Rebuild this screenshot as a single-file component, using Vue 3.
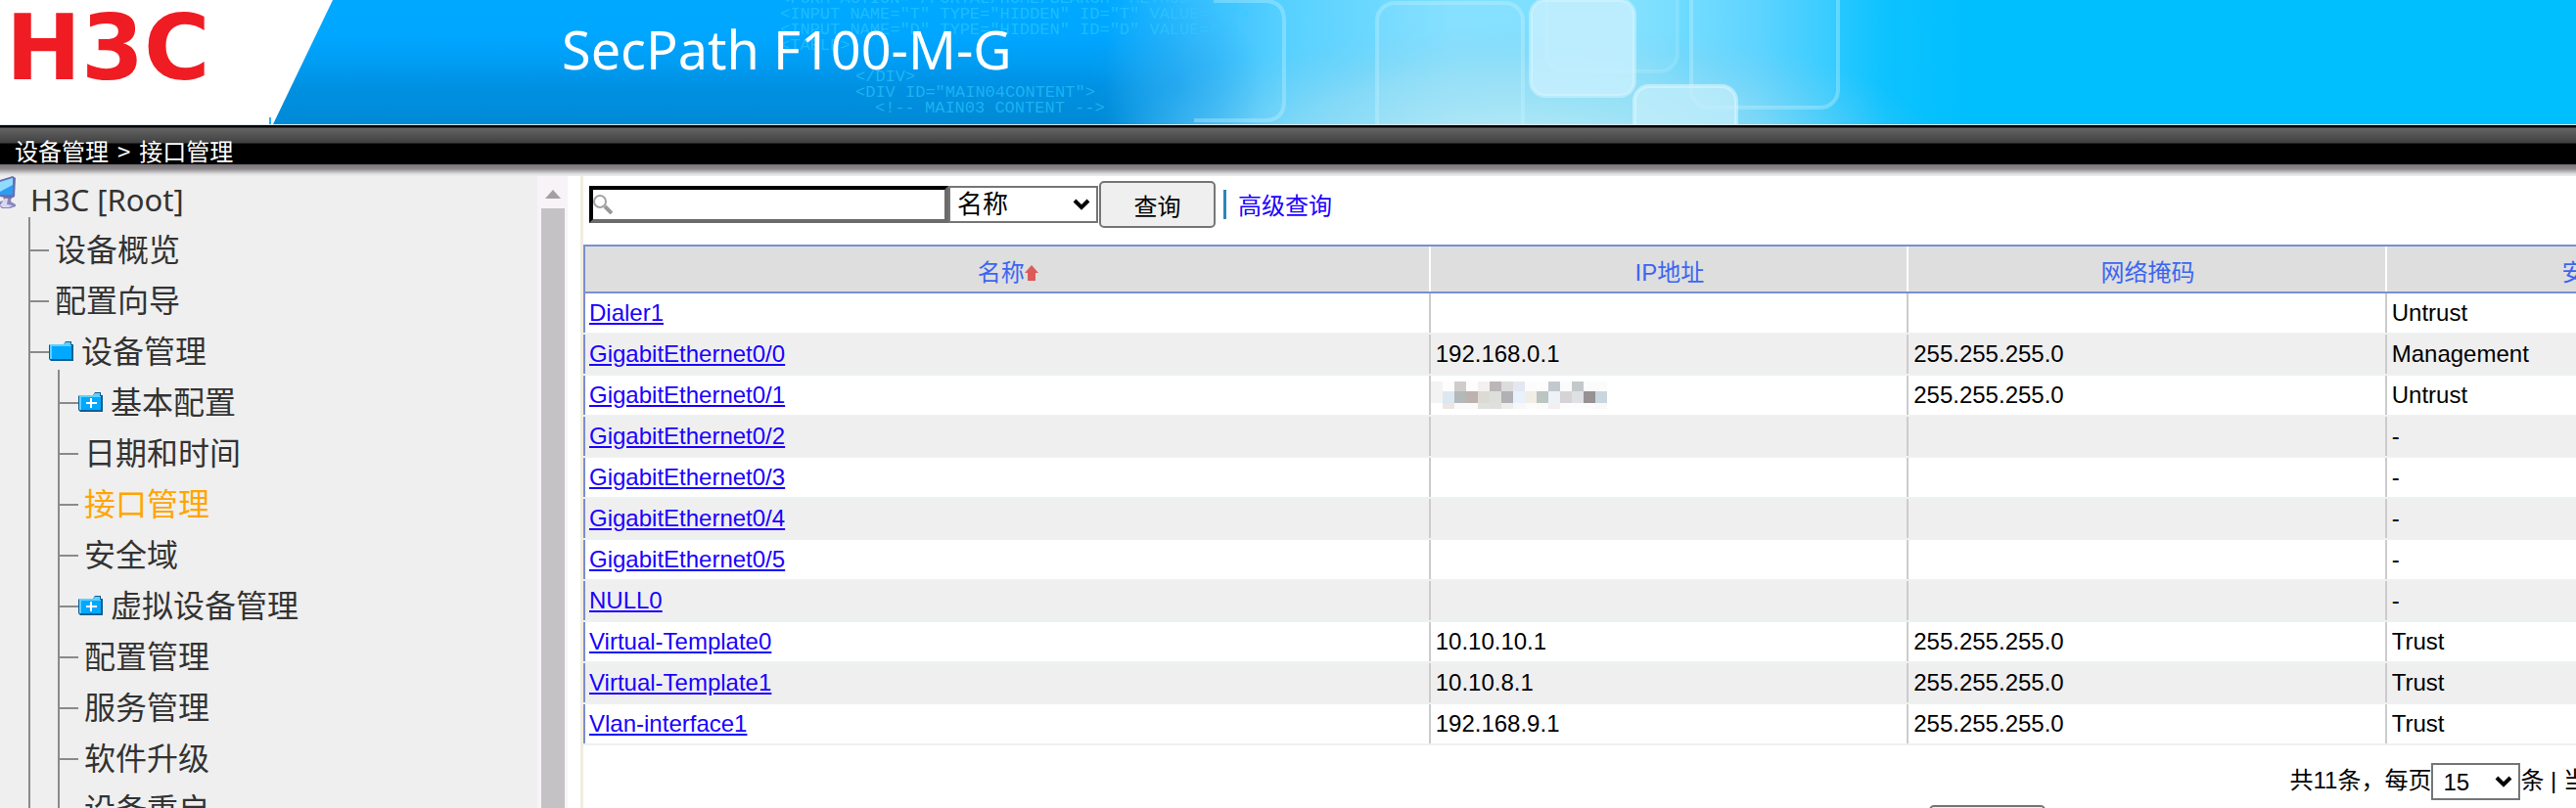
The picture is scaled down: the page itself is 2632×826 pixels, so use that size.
<script setup>
import { ref } from 'vue'

const keyword = ref('')
const field = ref('name')
const pageSize = ref('15')

const topItems = [
  { label: '设备概览' },
  { label: '配置向导' },
  {
    label: '设备管理',
    folder: 'open',
    children: [
      { label: '基本配置', folder: 'closed' },
      { label: '日期和时间' },
      { label: '接口管理', active: true },
      { label: '安全域' },
      { label: '虚拟设备管理', folder: 'closed' },
      { label: '配置管理' },
      { label: '服务管理' },
      { label: '软件升级' },
      { label: '设备重启' },
    ],
  },
]

const interfaces = [
  { name: 'Dialer1', ip: '', mask: '', zone: 'Untrust' },
  { name: 'GigabitEthernet0/0', ip: '192.168.0.1', mask: '255.255.255.0', zone: 'Management' },
  { name: 'GigabitEthernet0/1', hidden: true, mask: '255.255.255.0', zone: 'Untrust' },
  { name: 'GigabitEthernet0/2', ip: '', mask: '', zone: '-' },
  { name: 'GigabitEthernet0/3', ip: '', mask: '', zone: '-' },
  { name: 'GigabitEthernet0/4', ip: '', mask: '', zone: '-' },
  { name: 'GigabitEthernet0/5', ip: '', mask: '', zone: '-' },
  { name: 'NULL0', ip: '', mask: '', zone: '-' },
  { name: 'Virtual-Template0', ip: '10.10.10.1', mask: '255.255.255.0', zone: 'Trust' },
  { name: 'Virtual-Template1', ip: '10.10.8.1', mask: '255.255.255.0', zone: 'Trust' },
  { name: 'Vlan-interface1', ip: '192.168.9.1', mask: '255.255.255.0', zone: 'Trust' },
]

const mosaic = [
  { y: 0, h: 10, cells: ['#f3f3f3', '#fdfdfd', '#d1cccc', '#fdfdfd', '#f4f0f0', '#bcb5ba', '#dcdcdd', '#e4e7f1', '#fcfcfc', '#fdfdfd', '#c2c8d0', '#fbfbfb', '#c2c9cb', '#fbfbfb', '#fbfbfb'] },
  { y: 10, h: 12, cells: ['#f3f3f3', '#dce8f1', '#b3b8ba', '#bcb3ae', '#dcdad5', '#dddfda', '#b1b0b4', '#e9f2fb', '#f2ede5', '#bbc5c2', '#ecf2f7', '#d5d3d6', '#dee0e3', '#989194', '#c8d6df'] },
  { y: 22, h: 6, cells: ['#ffffff', '#ebe6e4', '#fafafa', '#fafafa', '#e0e0dd', '#dfdfde', '#ededed', '#f6f8f8', '#fbfbfb', '#f8fbfa', '#f4eef0', '#fcfcfc', '#fcfcfc', '#fbfbfb', '#f8f8f8'] },
]
</script>

<template>
  <div class="page">
    <header class="banner">
      <svg class="art" viewBox="0 0 2016 127" width="2016" height="127" aria-hidden="true">
        <defs>
          <linearGradient id="base" x1="0" y1="0" x2="0" y2="1">
            <stop offset="0" stop-color="#00a9ff" />
            <stop offset="0.3" stop-color="#00a6ff" />
            <stop offset="0.52" stop-color="#009cf2" />
            <stop offset="0.7" stop-color="#0090e2" />
            <stop offset="1" stop-color="#008ad6" />
          </linearGradient>
          <linearGradient id="glow" x1="1130" x2="2016" y1="0" y2="0" gradientUnits="userSpaceOnUse">
            <stop offset="0" stop-color="#40c4ff" stop-opacity="0" />
            <stop offset="0.1" stop-color="#45c4ff" stop-opacity="0.75" />
            <stop offset="0.2" stop-color="#55d0ff" />
            <stop offset="0.4" stop-color="#80dfff" />
            <stop offset="0.62" stop-color="#7adfff" />
            <stop offset="0.75" stop-color="#55d2ff" />
            <stop offset="0.9" stop-color="#0cc2ff" />
            <stop offset="1" stop-color="#00bfff" />
          </linearGradient>
          <radialGradient id="floor" cx="1560" cy="150" r="420" gradientUnits="userSpaceOnUse" gradientTransform="translate(0 105) scale(1 0.3)">
            <stop offset="0" stop-color="#c4eef4" stop-opacity="0.85" />
            <stop offset="0.6" stop-color="#a0ddf0" stop-opacity="0.5" />
            <stop offset="1" stop-color="#70c8ec" stop-opacity="0" />
          </radialGradient>
          <radialGradient id="shade" cx="1200" cy="85" r="90" gradientUnits="userSpaceOnUse">
            <stop offset="0" stop-color="#1f9ee8" stop-opacity="0.45" />
            <stop offset="1" stop-color="#1f9ee8" stop-opacity="0" />
          </radialGradient>
        </defs>
        <rect width="2016" height="127" fill="url(#base)" />
        <rect x="1130" width="886" height="127" fill="url(#glow)" />
        <rect x="1130" width="886" height="127" fill="url(#floor)" />
        <rect x="1110" width="200" height="127" fill="url(#shade)" />
        <g class="code">
          <text x="797" y="3">&lt;FORM ACTION="/PORTAL/HOME/SEARCH" METHOD="GET"&gt;</text>
          <text x="797" y="19">&lt;INPUT NAME="T" TYPE="HIDDEN" ID="T" VALUE="1"&gt;</text>
          <text x="797" y="35">&lt;INPUT NAME="D" TYPE="HIDDEN" ID="D" VALUE=""&gt;</text>
          <text x="797" y="51">&lt;TABLE&gt;</text>
          <text x="874" y="83">&lt;/DIV&gt;</text>
          <text x="874" y="99">&lt;DIV ID="MAIN04CONTENT"&gt;</text>
          <text x="894" y="115">&lt;!-- MAIN03 CONTENT --&gt;</text>
        </g>
        <g fill="#ffffff" fill-opacity="0.06" stroke="#c8f3ff" stroke-opacity="0.35" stroke-width="4">
          <path d="M1240 1h52q20 0 20 20v82q0 20-20 20h-72" fill="none" />
          <rect x="1407" y="3" width="149" height="140" rx="18" />
          <rect x="1580" y="-30" width="134" height="103" rx="18" stroke-opacity="0.2" />
          <rect x="1728" y="-30" width="150" height="140" rx="18" />
        </g>
        <rect x="1564" y="0" width="106" height="98" rx="15" fill="#cdf2ff" fill-opacity="0.75" stroke="#d8f6ff" stroke-opacity="0.5" stroke-width="4" />
        <rect x="1670" y="88" width="104" height="60" rx="15" fill="#c8f0fb" fill-opacity="0.7" stroke="#d8f6ff" stroke-opacity="0.6" stroke-width="4" />
        <polygon points="0,0 340,0 279,127 0,127" fill="#ffffff" />
        <rect x="275" y="120" width="2" height="7" fill="#25b4f5" />
      </svg>
      <strong class="logo">H3C</strong>
      <h1 class="product">SecPath F100-M-G</h1>
    </header>

    <nav class="crumbs" aria-label="路径">
      <span>设备管理</span>
      <span>&gt;</span>
      <span>接口管理</span>
    </nav>

    <div class="body">
      <aside class="sidebar">
        <nav class="tree" aria-label="导航">
          <div class="root">
            <svg class="monitor" viewBox="0 0 18 34" width="18" height="34" aria-hidden="true">
              <path d="M3 21h9l-1 6 5 3v2l-6 2H2l-2-2v-5l4-1z" fill="#8a86bd" />
              <path d="M5 24h3l-1 6 6 1-4 2H3l-3-2z" fill="#d9d8f2" />
              <path d="M0 5 13 1l3 2-1 19-4 2-11-2z" fill="#6a6eb0" />
              <path d="M0 7 13 3v17L0 20z" fill="#2e9bf2" />
              <path d="M0 7 13 3v7L0 17z" fill="#8fdcff" />
            </svg>
            <a href="#">H3C [Root]</a>
          </div>
          <ul>
            <li v-for="item in topItems" :key="item.label">
              <div class="row">
                <svg v-if="item.folder" class="folder" viewBox="0 0 25 20" width="25" height="20" aria-hidden="true">
                  <path d="M1 3h14l2-3h6v3h2v17H2L0 18V4z" fill="#0a5f93" />
                  <path d="M1 3h14l2-2h5v3h1v14H1z" fill="#5fd0ff" />
                  <path d="M3 5h20v13H3z" fill="#00a8ff" />
                </svg>
                <a href="#" :class="{ leaf: !item.folder }">{{ item.label }}</a>
              </div>
              <ul v-if="item.children">
                <li v-for="child in item.children" :key="child.label">
                  <div class="row">
                    <svg v-if="child.folder" class="folder" viewBox="0 0 25 20" width="25" height="20" aria-hidden="true">
                      <path d="M1 3h14l2-3h6v3h2v17H2L0 18V4z" fill="#0a5f93" />
                      <path d="M1 3h14l2-2h5v3h1v14H1z" fill="#5fd0ff" />
                      <path d="M3 5h20v13H3z" fill="#00a8ff" />
                      <path d="M8 11h11M13 6v10" stroke="#ffffff" stroke-width="2" />
                    </svg>
                    <a href="#" :class="{ leaf: !child.folder, active: child.active }">{{ child.label }}</a>
                  </div>
                </li>
              </ul>
            </li>
          </ul>
        </nav>
        <div class="scrollbar" aria-hidden="true">
          <span class="up"></span>
          <span class="thumb"></span>
        </div>
      </aside>

      <main class="content">
        <form class="search" @submit.prevent>
          <label class="query">
            <svg viewBox="0 0 20 20" width="20" height="20" aria-hidden="true">
              <circle cx="7" cy="7" r="6" fill="none" stroke="#a3a3a3" stroke-width="2" />
              <path d="M12 12l7 7" stroke="#999999" stroke-width="4" />
            </svg>
            <input v-model="keyword" type="text" aria-label="关键字" />
          </label>
          <span class="select field">
            <select v-model="field" aria-label="查询项">
              <option value="name">名称</option>
              <option value="ip">IP地址</option>
            </select>
            <svg viewBox="0 0 18 12" width="18" height="12" aria-hidden="true"><path d="M2 2l7 7 7-7" /></svg>
          </span>
          <button type="submit">查询</button>
          <span class="bar"></span>
          <a href="#" class="advanced">高级查询</a>
        </form>

        <table>
          <colgroup>
            <col class="c-name" />
            <col class="c-ip" />
            <col class="c-mask" />
            <col class="c-zone" />
          </colgroup>
          <thead>
            <tr>
              <th scope="col">名称<svg class="sort" viewBox="0 0 14 16" width="14" height="16" aria-hidden="true"><path d="M7 0l7 8h-3v8H3V8H0z" fill="#dd5a5a" /></svg></th>
              <th scope="col">IP地址</th>
              <th scope="col">网络掩码</th>
              <th scope="col">安全域</th>
            </tr>
          </thead>
          <tbody>
            <tr v-for="row in interfaces" :key="row.name">
              <td><a href="#">{{ row.name }}</a></td>
              <td>
                <svg v-if="row.hidden" class="mosaic" viewBox="0 0 180 28" width="180" height="28" aria-hidden="true">
                  <g v-for="band in mosaic" :key="band.y">
                    <rect v-for="(fill, i) in band.cells" :key="i" :x="i * 12" :y="band.y" width="12" :height="band.h" :fill="fill" />
                  </g>
                </svg>
                <template v-else>{{ row.ip }}</template>
              </td>
              <td>{{ row.mask }}</td>
              <td>{{ row.zone }}</td>
            </tr>
          </tbody>
        </table>

        <div class="pager">
          <span>共11条，每页</span>
          <span class="select size">
            <select v-model="pageSize" aria-label="每页条数">
              <option>15</option>
              <option>30</option>
            </select>
            <svg viewBox="0 0 18 12" width="18" height="12" aria-hidden="true"><path d="M2 2l7 7 7-7" /></svg>
          </span>
          <span>条 | 当</span>
        </div>
        <div class="actions"><button type="button" aria-label="新建"></button></div>
      </main>
    </div>
  </div>
</template>

<style>
body {
  margin: 0;
}
</style>

<style scoped>
.page {
  display: flex;
  flex-direction: column;
  height: 100vh;
  overflow: hidden;
  background: #ffffff;
  font-family: "Liberation Sans", "Noto Sans CJK SC", sans-serif;
  font-size: 24px;
  color: #000000;
}
.banner {
  position: relative;
  display: flex;
  flex: none;
  height: 127px;
  overflow: hidden;
  background: #00bfff;
}
.art {
  position: absolute;
  top: 0;
  left: 0;
}
.code {
  font-family: "Liberation Mono", monospace;
  font-size: 17px;
  fill: #30ccff;
  fill-opacity: 0.6;
}
.logo {
  position: relative;
  width: 568px;
  padding-left: 6px;
  font-family: "DejaVu Sans", sans-serif;
  font-size: 92px;
  line-height: 100px;
  color: #f01c23;
}
.product {
  position: relative;
  margin: 0;
  font-family: "Noto Sans", sans-serif;
  font-weight: 400;
  font-size: 54px;
  line-height: 100px;
  color: #ffffff;
}
.crumbs {
  box-sizing: border-box;
  display: flex;
  flex: none;
  gap: 9px;
  height: 41px;
  padding: 6px 0 0 15px;
  border-top: 1px solid #d8e4ec;
  background: linear-gradient(#000000 0 2px, #646464 3px, #404040 18px, #000000 19px);
  line-height: 40px;
  font-family: "Noto Sans CJK SC", sans-serif;
  color: #ffffff;
}
.body {
  position: relative;
  display: flex;
  flex: 1;
  min-height: 0;
}
.body::before {
  content: "";
  position: absolute;
  inset: 0 0 auto;
  height: 12px;
  background: linear-gradient(#777377, #8f8b8f 40%, #dcdcdc 80%, #efefef);
}
.sidebar {
  display: flex;
  flex: none;
  width: 580px;
  overflow: hidden;
  background: #efefef;
}
.tree {
  flex: 1;
  padding-top: 10px;
  font-family: "Noto Sans CJK SC", sans-serif;
  font-size: 32px;
  line-height: 52px;
}
.tree a {
  color: #333333;
  text-decoration: none;
}
.tree a.active {
  color: #ffa500;
}
.root {
  display: flex;
  gap: 13px;
  height: 52px;
  font-family: "Noto Sans", sans-serif;
  font-size: 31px;
}
.monitor {
  margin-top: 1px;
}
.tree ul {
  position: relative;
  margin: 0 0 0 29px;
  padding: 0;
  list-style: none;
}
.tree ul::before {
  content: "";
  position: absolute;
  top: -8px;
  bottom: 0;
  left: 0;
  width: 2px;
  background: #8a8a8a;
}
.row {
  display: flex;
  align-items: center;
  height: 52px;
}
.row::before {
  content: "";
  width: 21px;
  height: 2px;
  background: #8a8a8a;
}
.row a {
  margin-left: 8px;
  padding-bottom: 6px;
}
.row a.leaf {
  margin-left: 6px;
}
.folder {
  margin-bottom: 2px;
}
.tree ul ul {
  margin-left: 30px;
}
.scrollbar {
  display: flex;
  flex-direction: column;
  align-items: center;
  width: 31px;
  background: #f7f3f7;
}
.up {
  margin: 26px 0 10px;
  border: 8px solid transparent;
  border-top: 0;
  border-bottom: 9px solid #a3a0a3;
}
.thumb {
  flex: 1;
  width: 24px;
  background: #c4c2c5;
}
.content {
  flex: 1;
  min-width: 0;
  margin-left: 13px;
  border-left: 3px solid #f0ecdf;
  overflow: hidden;
}
.search {
  display: flex;
  align-items: center;
  height: 82px;
  padding-left: 6px;
}
.query {
  display: flex;
  align-items: center;
  box-sizing: border-box;
  width: 367px;
  height: 38px;
  border: 4px solid #6b6b6b;
  border-top-color: #000000;
  border-left-color: #000000;
}
.query input {
  flex: 1;
  min-width: 0;
  padding: 0;
  border: 0;
  outline: 0;
  background: none;
  font: inherit;
}
.select {
  position: relative;
  display: inline-flex;
  align-items: center;
}
.select select {
  box-sizing: border-box;
  width: 100%;
  height: 38px;
  padding: 0 7px;
  border: 2px solid #767676;
  border-radius: 0;
  appearance: none;
  background: #ffffff;
  font: inherit;
  color: #000000;
}
.select svg {
  position: absolute;
  right: 8px;
  fill: none;
  stroke: #000000;
  stroke-width: 4;
  pointer-events: none;
}
.field {
  width: 153px;
  font-size: 26px;
}
button {
  box-sizing: border-box;
  width: 119px;
  height: 48px;
  padding: 0;
  border: 2px solid #767676;
  border-radius: 5px;
  background: #efefef;
  font: inherit;
  color: #000000;
}
.search button {
  margin: 0 8px 0 1px;
}
.bar {
  width: 3px;
  height: 30px;
  background: #2a86b8;
}
.advanced {
  margin-left: 12px;
  padding-bottom: 2px;
  color: #1a00ff;
  text-decoration: none;
}
table {
  width: 111.600%;
  border-collapse: separate;
  border-spacing: 0;
  table-layout: fixed;
}
.c-name {
  width: 38.100%;
}
.c-ip,
.c-mask {
  width: 21.500%;
}
.c-zone {
  width: 18.900%;
}
th {
  box-sizing: border-box;
  height: 50px;
  padding: 8px 0 0;
  border: solid #7a8fd0;
  border-width: 2px 0;
  background: #dedede;
  font-weight: 400;
  line-height: 32px;
  color: #3c66f0;
  box-shadow: inset -2px 0 #ffffff;
}
th:first-child {
  border-left-width: 2px;
}
.sort {
  vertical-align: 0;
}
td {
  box-sizing: border-box;
  height: 42px;
  padding: 0 4px 0 5px;
  border-bottom: 2px solid #edf2f1;
  line-height: 40px;
  white-space: nowrap;
  box-shadow: inset -2px 0 #cccccc;
}
td:first-child {
  padding-left: 6px;
  box-shadow: inset 2px 0 #7a8fd0, inset -2px 0 #cccccc;
}
tbody tr:nth-child(even) {
  background: #efefef;
}
td a {
  color: #1a00ff;
}
.mosaic {
  display: block;
  margin-left: -5px;
}
.pager {
  display: flex;
  align-items: center;
  justify-content: flex-end;
  height: 38px;
  margin: 18px -11px 0 0;
  line-height: 36px;
}
.pager > span:not(.select) {
  padding-bottom: 2px;
}
.size {
  width: 91px;
}
.size select {
  padding: 0 10px;
}
.actions {
  display: flex;
  justify-content: flex-end;
  padding: 5px 542px 0 0;
}
</style>
